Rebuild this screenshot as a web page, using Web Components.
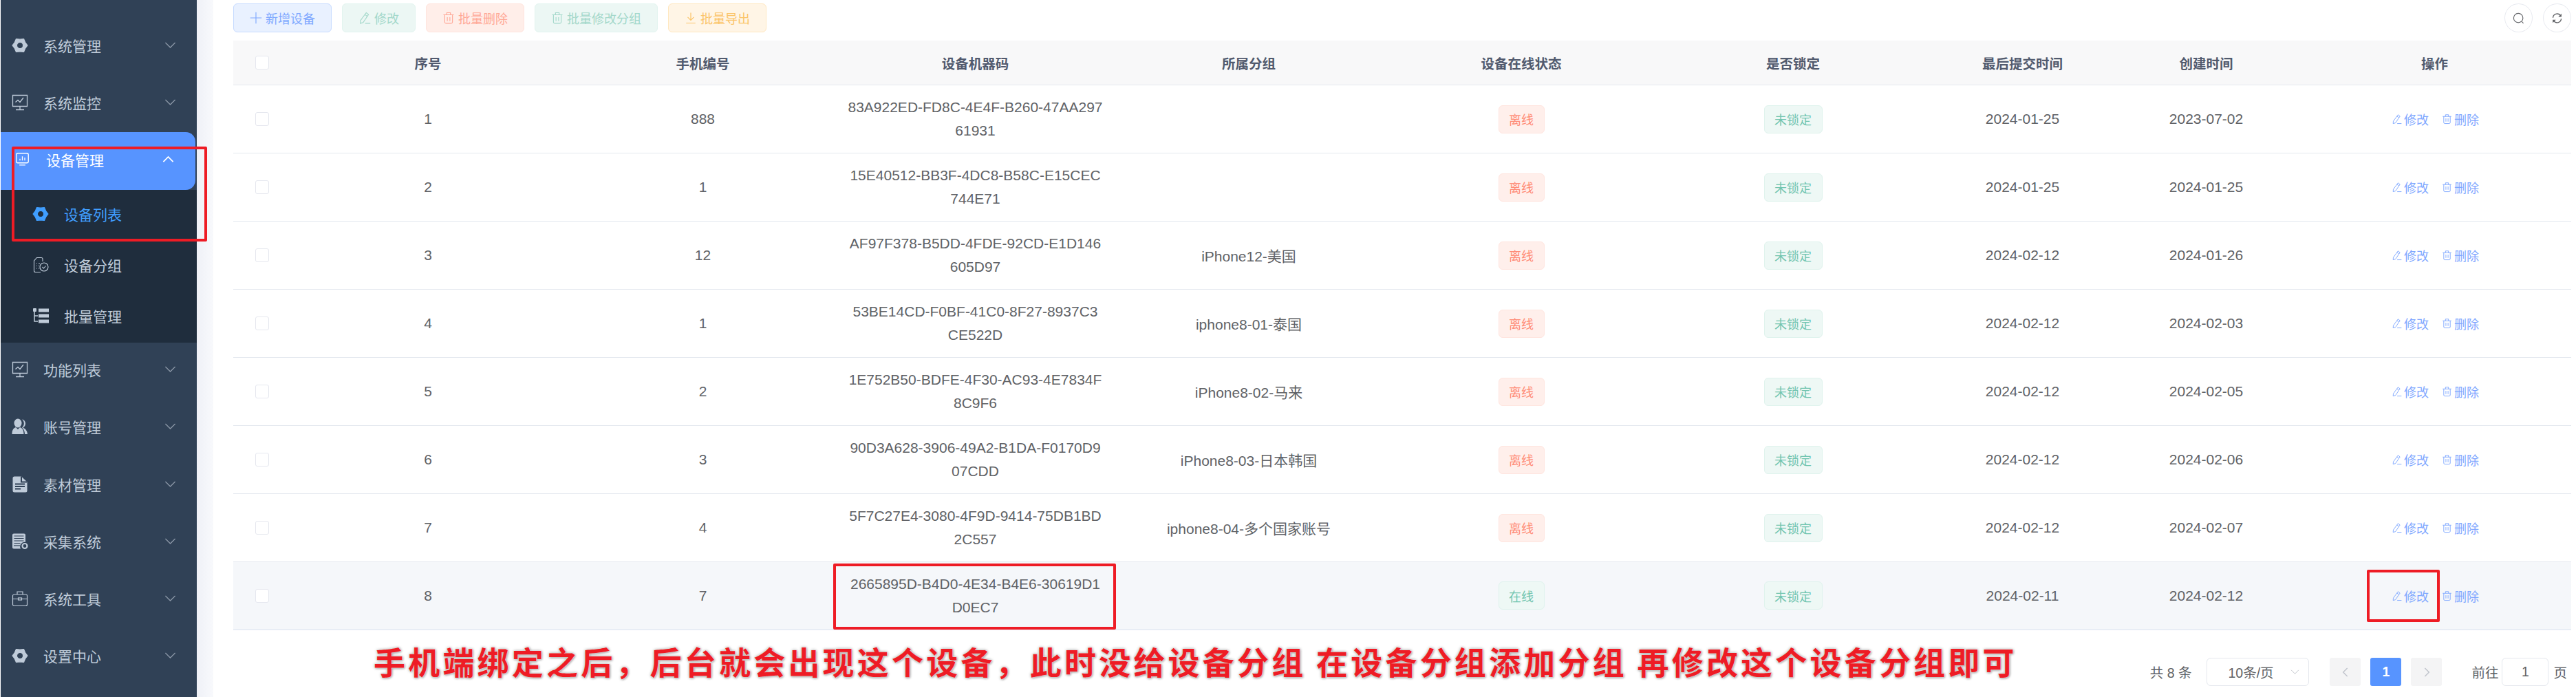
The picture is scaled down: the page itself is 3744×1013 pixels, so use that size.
<!DOCTYPE html>
<html lang="zh">
<head>
<meta charset="utf-8">
<title>设备列表</title>
<style>
    html, body {
        margin: 0;
        height: 100%;
        overflow: hidden;
        background: #fff;
    }
</style>
</head>
<body>

<app-shell>
    <side-menu slot="side"></side-menu>

    <tool-bar slot="main"></tool-bar>
    <device-table slot="main"></device-table>
    <foot-bar slot="main">
        <note-text>手机端绑定之后&#65292;后台就会出现这个设备&#65292;此时没给设备分组 在设备分组添加分组 再修改这个设备分组即可</note-text>
        <page-nav></page-nav>
    </foot-bar>

    <mark-box slot="over" x="17" y="213" w="284" h="138"></mark-box>
    <mark-box slot="over" x="1211" y="819" w="411" h="96"></mark-box>
    <mark-box slot="over" x="3440" y="828" w="106" h="76"></mark-box>
</app-shell>

<script>
const FONT = `"Liberation Sans", "Noto Sans CJK SC", sans-serif`;

const ICONS = {
    gear: `<svg viewBox="0 0 24 24" fill="currentColor" stroke="currentColor" stroke-width="1.2" stroke-linejoin="round"><path fill-rule="evenodd" d="M23 12 19.6 16.4 17.5 21.5 12 20.8 6.5 21.5 4.4 16.4 1 12 4.4 7.6 6.5 2.5 12 3.2 17.5 2.5 19.6 7.6ZM12 7.4a4.6 4.6 0 1 0 0 9.2a4.6 4.6 0 0 0 0-9.2Z"/></svg>`,
    monitor: `<svg viewBox="0 0 24 24" fill="none" stroke="currentColor" stroke-width="1.3"><path d="M1.500 1.500h21v16h-21zM12 17.500v5M6 22.500h12"/><path d="M5.500 11.500l3.500-3 3 3 5-6.500"/></svg>`,
    screen: `<svg viewBox="0 0 24 24" fill="none" stroke="currentColor" stroke-width="1.5"><rect x="2" y="2" width="20" height="16" rx="2.500"/><path d="M7 21.500h10M8 14v-3M12 14V7M16 14v-5"/></svg>`,
    group: `<svg viewBox="0 0 24 24" fill="none" stroke="currentColor" stroke-width="1.100"><path d="M12 22.500H4.500a2 2 0 0 1-2-2V6l4-4.500H13a2 2 0 0 1 2 2V7"/><circle cx="17" cy="15" r="6"/><path d="M14.500 15l2 2 3-3.500M6 10h1M9 10h2M6 13.500h1M9 13.500h1.500M6 17h1M9 17h1.500"/></svg>`,
    tree: `<svg viewBox="0 0 24 24" fill="currentColor"><rect x="1" y="1" width="5" height="5" rx="1"/><rect x="9" y="1.500" width="15" height="5"/><rect x="9" y="9.500" width="15" height="5"/><rect x="9" y="17.500" width="15" height="5"/><path d="M3 6v14h5M3 12h5" fill="none" stroke="currentColor" stroke-width="1.500"/></svg>`,
    users: `<svg viewBox="0 0 24 24" fill="currentColor"><ellipse cx="9" cy="7" rx="5.500" ry="6.500"/><path d="M0.500 23c0-6 2-9 5.500-10l3 3 3-3c3.500 1 5.500 4 5.500 10z"/><path d="M15 1.500c3 .5 5 3 5 6s-1.500 5-3.500 6c3.500 1.500 6 4.500 6.500 9.500h-4c0-4-1.500-7.500-4-9.500 2-2 3-4 2.800-6.500-.1-2-1-4-2.800-5.500z"/></svg>`,
    doc: `<svg viewBox="0 0 24 24"><path fill="currentColor" d="M4 .5h10l8.500 8V21a2.500 2.500 0 0 1-2.500 2.500H4A2.500 2.500 0 0 1 1.500 21V3A2.500 2.500 0 0 1 4 .5Z"/><path fill="none" stroke="#304156" stroke-width="2" d="M5 11.500h14M5 15h14M5 18.500h8M14 .5v8h8"/></svg>`,
    server: `<svg viewBox="0 0 24 24" fill="currentColor"><path d="M3 .5h15a2 2 0 0 1 2 2V13a6.500 6.500 0 0 0-7 9.500H3a2 2 0 0 1-2-2V2.500a2 2 0 0 1 2-2Z"/><path d="M3.500 4h14M3.500 7.500h14M3.500 11h14M3.500 14.500h9" stroke="#304156" stroke-width="1.200"/><path d="M3 18h9" stroke="#304156" stroke-width="1.200"/><circle cx="19" cy="18.500" r="3.500" fill="none" stroke="currentColor" stroke-width="2.200"/></svg>`,
    case: `<svg viewBox="0 0 24 24" fill="none" stroke="currentColor" stroke-width="1.200"><rect x="1.500" y="6" width="21" height="16.500" rx="2"/><path d="M8 6V2h8v4M1.500 12.500h8M14.500 12.500h8"/><rect x="9.500" y="11" width="5" height="3"/></svg>`,
    down: `<svg viewBox="0 0 24 24" fill="none" stroke="currentColor" stroke-width="1.800"><path d="M2 7l10 10 10-10"/></svg>`,
    up: `<svg viewBox="0 0 24 24" fill="none" stroke="currentColor" stroke-width="2.600"><path d="M2 17l10-10 10 10"/></svg>`,
    left: `<svg viewBox="0 0 24 24" fill="none" stroke="currentColor" stroke-width="2.200"><path d="M16 3l-9 9 9 9"/></svg>`,
    right: `<svg viewBox="0 0 24 24" fill="none" stroke="currentColor" stroke-width="2.200"><path d="M8 3l9 9-9 9"/></svg>`,
    plus: `<svg viewBox="0 0 24 24" fill="none" stroke="currentColor" stroke-width="1.500"><path d="M12 1v22M1 12h22"/></svg>`,
    edit: `<svg viewBox="0 0 24 24" fill="none" stroke="currentColor" stroke-width="1.500"><path d="M15 2l4.500 3.500L9 21l-5.500 1.500L4 17ZM12.500 5.500L17 9M13 22.500h10"/></svg>`,
    trash: `<svg viewBox="0 0 24 24" fill="none" stroke="currentColor" stroke-width="1.500"><path d="M2 6h20M8.500 6V2h7v4M4.500 6v14a2.500 2.500 0 0 0 2.500 2.500h10a2.500 2.500 0 0 0 2.500-2.500V6M9.500 10.500v7.500M14.500 10.500v7.500"/></svg>`,
    save: `<svg viewBox="0 0 24 24" fill="none" stroke="currentColor" stroke-width="1.600"><path d="M12 2v14M6 10.500l6 6 6-6M3 22h18"/></svg>`,
    search: `<svg viewBox="0 0 24 24" fill="none" stroke="#606266" stroke-width="1.600"><circle cx="11.500" cy="11.500" r="9.500"/><path d="M18.500 19l3.500 3.500"/></svg>`,
    refresh: `<svg viewBox="0 0 24 24" fill="none" stroke="#606266" stroke-width="2"><path d="M3.500 11a8.500 8.500 0 0 1 15-5M20.500 13a8.500 8.500 0 0 1-15 5"/><path fill="#606266" stroke="none" d="M21 2.500v6.500h-6.500ZM3 21.500V15h6.500Z"/></svg>`
};


const shellTemplate = document.createElement('template');
shellTemplate.innerHTML = `
    <style>
        :host {
            display: flex;
            position: relative;
            height: 1013px;
            overflow: hidden;
            font-family: ${FONT};
        }
        .gutter {
            flex: none;
            width: 24px;
            background: linear-gradient(90deg, #eff1f7, #f8f9fc);
        }
        .main {
            flex: 1;
            min-width: 0;
            display: flex;
            flex-direction: column;
            padding: 5px 7px 0 29px;
        }
    </style>
    <slot name="side"></slot>
    <div class="gutter"></div>
    <div class="main"><slot name="main"></slot></div>
    <slot name="over"></slot>
`;

class AppShell extends HTMLElement {
    constructor () {
        super();
        this._shadowRoot = this.attachShadow({ mode: 'open' });
        this._shadowRoot.appendChild(shellTemplate.content.cloneNode(true));
    }
}


const menuTemplate = document.createElement('template');
menuTemplate.innerHTML = `
    <style>
        :host {
            display: block;
            flex: none;
            box-sizing: border-box;
            width: 285px;
            height: 1013px;
            padding-top: 26px;
            margin-left: 1px;
            background: #304156;
        }
        .sub {
            background: #1f2d3d;
        }
    </style>
    <menu-item icon="gear">系统管理</menu-item>
    <menu-item icon="monitor">系统监控</menu-item>
    <menu-item icon="screen" active>设备管理</menu-item>
    <div class="sub">
        <menu-item icon="gear" sub current>设备列表</menu-item>
        <menu-item icon="group" sub>设备分组</menu-item>
        <menu-item icon="tree" sub>批量管理</menu-item>
    </div>
    <menu-item icon="monitor">功能列表</menu-item>
    <menu-item icon="users">账号管理</menu-item>
    <menu-item icon="doc">素材管理</menu-item>
    <menu-item icon="server">采集系统</menu-item>
    <menu-item icon="case">系统工具</menu-item>
    <menu-item icon="gear">设置中心</menu-item>
`;

class SideMenu extends HTMLElement {
    constructor () {
        super();
        this._shadowRoot = this.attachShadow({ mode: 'open' });
        this._shadowRoot.appendChild(menuTemplate.content.cloneNode(true));
    }
}


const itemTemplate = document.createElement('template');
itemTemplate.innerHTML = `
    <style>
        :host {
            display: flex;
            align-items: center;
            box-sizing: border-box;
            height: 83.2px;
            padding: 0 30px 0 16px;
            font-size: 21px;
            color: #bfcbd9;
        }
        .icon {
            flex: none;
            width: 24px;
            height: 24px;
            margin-top: -4px;
        }
        .label {
            flex: 1;
            margin-left: 22px;
            line-height: 30px;
        }
        .arrow {
            flex: none;
            width: 17px;
            height: 17px;
            margin-top: -5px;
            color: #8b97a7;
        }
        svg { display: block; width: 100%; height: 100%; }
        :host([active]) {
            width: 283px;
            padding-left: 21px;
            padding-right: 31px;
            color: #fff;
            background: #5794ff;
            border-radius: 0 14px 14px 0;
        }
        :host([active]) .icon { width: 21px; height: 21px; }
        :host([active]) .label { margin-left: 24px; }
        :host([active]) .arrow { color: #fff; }
        :host([sub]) {
            height: 74px;
            padding-left: 46px;
        }
        :host([sub]) .arrow { display: none; }
        :host([current]) { color: #409eff; }
    </style>
    <span class="icon"></span>
    <span class="label"><slot></slot></span>
    <span class="arrow"></span>
`;

class MenuItem extends HTMLElement {
    constructor () {
        super();
        this._shadowRoot = this.attachShadow({ mode: 'open' });
        this._shadowRoot.appendChild(itemTemplate.content.cloneNode(true));
        this.$icon = this._shadowRoot.querySelector('.icon');
        this.$arrow = this._shadowRoot.querySelector('.arrow');
    }

    connectedCallback() {
        this.$icon.innerHTML = ICONS[this.getAttribute('icon')];
        this.$arrow.innerHTML = this.hasAttribute('active') ? ICONS.up : ICONS.down;
    }
}


const buttonTemplate = document.createElement('template');
buttonTemplate.innerHTML = `
    <style>
        :host {
            display: inline-flex;
            align-items: center;
            justify-content: center;
            gap: 5px;
            box-sizing: border-box;
            height: 42px;
            padding: 0 23px;
            font-size: 18px;
            border: 1.500px solid var(--line);
            border-radius: 6px;
            background: var(--back);
            color: var(--ink);
        }
        :host([kind="primary"]) { --back: #e9f1ff; --line: #c7dbff; --ink: #7fa8ff; }
        :host([kind="success"]) { --back: #ecf7f4; --line: #e2f4ef; --ink: #a3d8ca; }
        :host([kind="danger"]) { --back: #ffeee9; --line: #ffe4dd; --ink: #ffa897; }
        :host([kind="warning"]) { --back: #fff5e6; --line: #ffe7bf; --ink: #fbc469; }
        .icon { width: 18px; height: 18px; }
        svg { display: block; width: 100%; height: 100%; }
    </style>
    <span class="icon"></span>
    <slot></slot>
`;

class ToolButton extends HTMLElement {
    constructor () {
        super();
        this._shadowRoot = this.attachShadow({ mode: 'open' });
        this._shadowRoot.appendChild(buttonTemplate.content.cloneNode(true));
    }

    connectedCallback() {
        this._shadowRoot.querySelector('.icon').innerHTML = ICONS[this.getAttribute('icon')];
    }
}


const toolbarTemplate = document.createElement('template');
toolbarTemplate.innerHTML = `
    <style>
        :host {
            display: flex;
            gap: 15px;
            height: 42px;
            margin-bottom: 12px;
        }
        .round {
            display: flex;
            align-items: center;
            justify-content: center;
            box-sizing: border-box;
            width: 41px;
            height: 42px;
            border: 1.500px solid #e8eaf0;
            border-radius: 50%;
        }
        .round svg { width: 17px; height: 17px; }
        .push { margin-left: auto; }
    </style>
    <tool-button kind="primary" icon="plus">新增设备</tool-button>
    <tool-button kind="success" icon="edit">修改</tool-button>
    <tool-button kind="danger" icon="trash">批量删除</tool-button>
    <tool-button kind="success" icon="trash">批量修改分组</tool-button>
    <tool-button kind="warning" icon="save">批量导出</tool-button>
    <span class="round push">${ICONS.search}</span>
    <span class="round">${ICONS.refresh}</span>
`;

class ToolBar extends HTMLElement {
    constructor () {
        super();
        this._shadowRoot = this.attachShadow({ mode: 'open' });
        this._shadowRoot.appendChild(toolbarTemplate.content.cloneNode(true));
    }
}


const tagTemplate = document.createElement('template');
tagTemplate.innerHTML = `
    <style>
        :host {
            display: inline-flex;
            align-items: center;
            box-sizing: border-box;
            height: 41px;
            padding: 0 14.500px;
            font-size: 18px;
            border-radius: 6px;
            border: 1px solid #dff3ed;
            background: #eef8f5;
            color: #72c5b0;
        }
        :host([kind="off"]) {
            border-color: #ffe5df;
            background: #ffefeb;
            color: #ff8c77;
        }
    </style>
    <slot></slot>
`;

class StatusTag extends HTMLElement {
    constructor () {
        super();
        this._shadowRoot = this.attachShadow({ mode: 'open' });
        this._shadowRoot.appendChild(tagTemplate.content.cloneNode(true));
    }
}


const rowStyle = `
    <style>
        :host {
            display: grid;
            grid-template-columns: 83px 400px 399px 393px 402px 390px 400px 267px 267px 397px;
            box-sizing: border-box;
            border-bottom: 1px solid #e4e8ef;
        }
        .cell {
            display: flex;
            flex-direction: column;
            align-items: center;
            justify-content: center;
            text-align: center;
        }
        .box {
            box-sizing: border-box;
            width: 20px;
            height: 20px;
            background: #fff;
            border: 1.500px solid #e6e8ef;
            border-radius: 3px;
        }
    </style>
`;

const headTemplate = document.createElement('template');
headTemplate.innerHTML = rowStyle + `
    <style>
        :host {
            height: 65px;
            background: #f8f8f9;
            font-size: 19.500px;
            font-weight: 700;
            color: #515a6e;
        }
    </style>
    <div class="cell"><span class="box"></span></div>
    <div class="cell">序号</div>
    <div class="cell">手机编号</div>
    <div class="cell">设备机器码</div>
    <div class="cell">所属分组</div>
    <div class="cell">设备在线状态</div>
    <div class="cell">是否锁定</div>
    <div class="cell">最后提交时间</div>
    <div class="cell">创建时间</div>
    <div class="cell">操作</div>
`;

class DeviceHead extends HTMLElement {
    constructor () {
        super();
        this._shadowRoot = this.attachShadow({ mode: 'open' });
        this._shadowRoot.appendChild(headTemplate.content.cloneNode(true));
    }
}

const rowTemplate = document.createElement('template');
rowTemplate.innerHTML = rowStyle + `
    <style>
        :host {
            height: 99px;
            font-size: 21px;
            color: #606266;
        }
        :host([hover]) {
            background: #f5f7fa;
            border-bottom: 2px solid #e8edf5;
        }
        .code { line-height: 34px; }
        .ops {
            flex-direction: row;
            gap: 19px;
            padding-left: 2px;
            font-size: 18px;
            color: #7fa8ff;
        }
        .ops span {
            display: flex;
            align-items: center;
            gap: 3px;
        }
        .ops svg { width: 15px; height: 16px; }
    </style>
    <div class="cell"><span class="box"></span></div>
    <div class="cell no"></div>
    <div class="cell phone"></div>
    <div class="cell code"></div>
    <div class="cell group"></div>
    <div class="cell"><status-tag class="state"></status-tag></div>
    <div class="cell"><status-tag>未锁定</status-tag></div>
    <div class="cell last"></div>
    <div class="cell created"></div>
    <div class="cell ops">
        <span>${ICONS.edit}修改</span>
        <span>${ICONS.trash}删除</span>
    </div>
`;

class DeviceRow extends HTMLElement {
    constructor () {
        super();
        this._shadowRoot = this.attachShadow({ mode: 'open' });
        this._shadowRoot.appendChild(rowTemplate.content.cloneNode(true));
        this.$state = this._shadowRoot.querySelector('.state');
    }

    set data (row) {
        const $ = name => this._shadowRoot.querySelector(name);
        $('.no').textContent = row.no;
        $('.phone').textContent = row.phone;
        row.code.forEach(line => {
            const $line = document.createElement('div');
            $line.textContent = line;
            $('.code').appendChild($line);
        });
        $('.group').textContent = row.group;
        $('.last').textContent = row.last;
        $('.created').textContent = row.created;
        this.$state.textContent = row.online ? '在线' : '离线';
        if (!row.online) this.$state.setAttribute('kind', 'off');
        if (row.online) this.setAttribute('hover', '');
    }
}


const rows = [
    { no: 1, phone: '888', code: ['83A922ED-FD8C-4E4F-B260-47AA297', '61931'], group: '', last: '2024-01-25', created: '2023-07-02' },
    { no: 2, phone: '1', code: ['15E40512-BB3F-4DC8-B58C-E15CEC', '744E71'], group: '', last: '2024-01-25', created: '2024-01-25' },
    { no: 3, phone: '12', code: ['AF97F378-B5DD-4FDE-92CD-E1D146', '605D97'], group: 'iPhone12-美国', last: '2024-02-12', created: '2024-01-26' },
    { no: 4, phone: '1', code: ['53BE14CD-F0BF-41C0-8F27-8937C3', 'CE522D'], group: 'iphone8-01-泰国', last: '2024-02-12', created: '2024-02-03' },
    { no: 5, phone: '2', code: ['1E752B50-BDFE-4F30-AC93-4E7834F', '8C9F6'], group: 'iPhone8-02-马来', last: '2024-02-12', created: '2024-02-05' },
    { no: 6, phone: '3', code: ['90D3A628-3906-49A2-B1DA-F0170D9', '07CDD'], group: 'iPhone8-03-日本韩国', last: '2024-02-12', created: '2024-02-06' },
    { no: 7, phone: '4', code: ['5F7C27E4-3080-4F9D-9414-75DB1BD', '2C557'], group: 'iphone8-04-多个国家账号', last: '2024-02-12', created: '2024-02-07' },
    { no: 8, phone: '7', code: ['2665895D-B4D0-4E34-B4E6-30619D1', 'D0EC7'], group: '', last: '2024-02-11', created: '2024-02-12', online: true }
];

const tableTemplate = document.createElement('template');
tableTemplate.innerHTML = `
    <style>
        :host {
            display: block;
        }
    </style>
    <device-head></device-head>
    <div class="body"></div>
`;

class DeviceTable extends HTMLElement {
    constructor () {
        super();
        this._shadowRoot = this.attachShadow({ mode: 'open' });
        this._shadowRoot.appendChild(tableTemplate.content.cloneNode(true));
        this.$body = this._shadowRoot.querySelector('.body');
    }

    connectedCallback() {
        rows.forEach(row => {
            const $row = document.createElement('device-row');
            $row.data = row;
            this.$body.appendChild($row);
        });
    }
}


const footTemplate = document.createElement('template');
footTemplate.innerHTML = `
    <style>
        :host {
            display: flex;
            align-items: center;
            justify-content: space-between;
            height: 41px;
            margin-top: 40px;
        }
    </style>
    <slot></slot>
`;

class FootBar extends HTMLElement {
    constructor () {
        super();
        this._shadowRoot = this.attachShadow({ mode: 'open' });
        this._shadowRoot.appendChild(footTemplate.content.cloneNode(true));
    }
}


const navTemplate = document.createElement('template');
navTemplate.innerHTML = `
    <style>
        :host {
            display: flex;
            align-items: center;
            justify-content: flex-end;
            height: 41px;
            padding-right: 6px;
            font-size: 19.500px;
            color: #606266;
        }
        .size {
            display: flex;
            align-items: center;
            box-sizing: border-box;
            width: 149px;
            height: 41px;
            margin: 0 30px 0 22px;
            padding: 0 13px 0 30px;
            border: 1.500px solid #e4e7ed;
            border-radius: 6px;
        }
        .size span { flex: 1; }
        .size svg { width: 13px; height: 13px; color: #c0c4cc; }
        .page {
            display: flex;
            align-items: center;
            justify-content: center;
            width: 45px;
            height: 41px;
            margin-right: 14px;
            border-radius: 3px;
            background: #f4f4f5;
            color: #c0c4cc;
        }
        .page svg { width: 16px; height: 16px; }
        .page.on {
            background: #5794ff;
            color: #fff;
            font-weight: 700;
        }
        .page.end { margin-right: 43px; }
        .jump {
            display: flex;
            align-items: center;
            justify-content: center;
            box-sizing: border-box;
            width: 68px;
            height: 41px;
            margin: 0 7px 0 5px;
            border: 1.500px solid #e4e7ed;
            border-radius: 6px;
        }
    </style>
    <span>共 8 条</span>
    <div class="size"><span>10条/页</span>${ICONS.down}</div>
    <div class="page">${ICONS.left}</div>
    <div class="page on">1</div>
    <div class="page end">${ICONS.right}</div>
    <span>前往</span>
    <div class="jump">1</div>
    <span>页</span>
`;

class PageNav extends HTMLElement {
    constructor () {
        super();
        this._shadowRoot = this.attachShadow({ mode: 'open' });
        this._shadowRoot.appendChild(navTemplate.content.cloneNode(true));
    }
}


const markTemplate = document.createElement('template');
markTemplate.innerHTML = `
    <style>
        :host {
            position: absolute;
            box-sizing: border-box;
            border: 4.500px solid #ee1c25;
            border-radius: 2px;
        }
    </style>
`;

class MarkBox extends HTMLElement {
    constructor () {
        super();
        this._shadowRoot = this.attachShadow({ mode: 'open' });
        this._shadowRoot.appendChild(markTemplate.content.cloneNode(true));
    }

    connectedCallback() {
        this.style.left = this.getAttribute('x') + 'px';
        this.style.top = this.getAttribute('y') + 'px';
        this.style.width = this.getAttribute('w') + 'px';
        this.style.height = this.getAttribute('h') + 'px';
    }
}


const noteTemplate = document.createElement('template');
noteTemplate.innerHTML = `
    <style>
        :host {
            display: block;
            margin: -34px 0 0 204px;
            font-family: "Noto Sans CJK SC", sans-serif;
            font-weight: 700;
            font-size: 46px;
            line-height: 60px;
            letter-spacing: 4.200px;
            white-space: nowrap;
            color: #ee1c25;
            text-shadow: 0 0 2px #fff, 0 0 4px #999, 1px 1px 3px #aaa;
        }
    </style>
    <slot></slot>
`;

class NoteText extends HTMLElement {
    constructor () {
        super();
        this._shadowRoot = this.attachShadow({ mode: 'open' });
        this._shadowRoot.appendChild(noteTemplate.content.cloneNode(true));
    }
}


customElements.define('app-shell', AppShell);
customElements.define('side-menu', SideMenu);
customElements.define('menu-item', MenuItem);
customElements.define('tool-button', ToolButton);
customElements.define('tool-bar', ToolBar);
customElements.define('status-tag', StatusTag);
customElements.define('device-head', DeviceHead);
customElements.define('device-row', DeviceRow);
customElements.define('device-table', DeviceTable);
customElements.define('foot-bar', FootBar);
customElements.define('page-nav', PageNav);
customElements.define('mark-box', MarkBox);
customElements.define('note-text', NoteText);
</script>
</body>
</html>
